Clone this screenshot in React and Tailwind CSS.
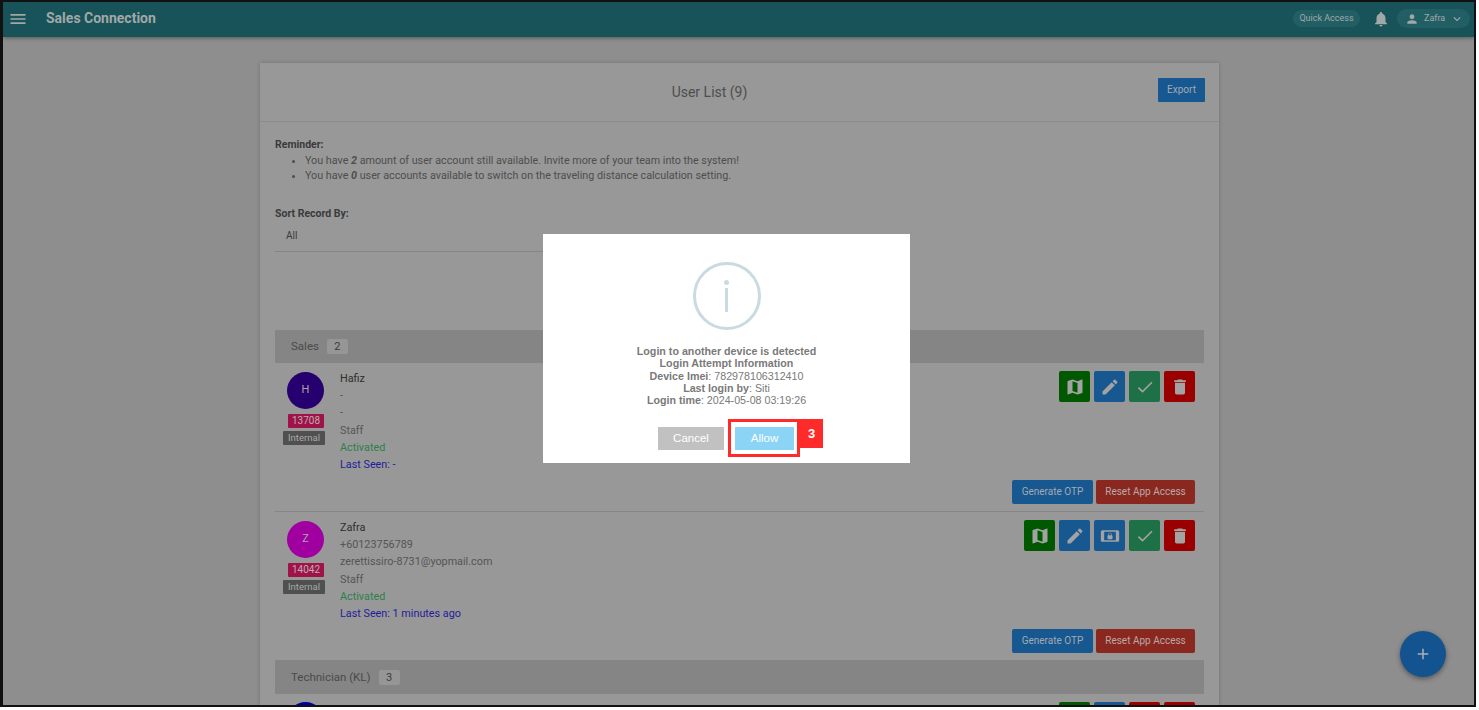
import React from "react";
import { MdMenu, MdNotifications, MdPerson, MdKeyboardArrowDown, MdMap, MdEdit, MdCheck, MdDelete, MdScreenLockLandscape, MdAdd } from "react-icons/md";

function IconBtn({ color, icon: Icon }) {
  return (
    <div className={`w-[31px] h-[31px] rounded-[2px] flex items-center justify-center text-[#a3a3a3] ${color}`}>
      <Icon size={20} />
    </div>
  );
}

function UserRow({ initial, avatar, name, phone, email, code, seen, lock }) {
  return (
    <div className="h-[149px] border-b border-[#868686] flex pl-[8px] pr-[9px] pt-[8px] pb-[8px]">
      <div className="w-[42px] flex flex-col items-end">
        <div className={`w-[37px] h-[37px] mt-[1px] mr-[1px] rounded-full flex items-center justify-center text-[#b0a0b0] text-[11px] ${avatar}`}>{initial}</div>
        <div className="mt-[5px] mr-[1px] w-[36px] h-[14px] rounded-[1px] bg-[#a0134a] text-[#b8b0b0] text-[10px] leading-[14px] text-center">{code}</div>
        <div className="mt-[3px] w-[42px] h-[14px] rounded-[1px] bg-[#505050] text-[#a8a8a8] text-[9.5px] leading-[14px] text-center">Internal</div>
      </div>
      <div className="ml-[15px] flex-1 text-[10.8px] leading-[17.2px] text-[#555555] -mt-[1px]">
        <div className="text-[#2e2e2e]">{name}</div>
        <div>{phone}</div>
        <div>{email}</div>
        <div>Staff</div>
        <div className="text-[#2e7f4f]">Activated</div>
        <div className="text-[#241c9c]">{seen}</div>
      </div>
      <div className="flex flex-col justify-between items-end">
        <div className="flex gap-[4px]">
          <IconBtn color="bg-[#005800]" icon={MdMap} />
          <IconBtn color="bg-[#175890]" icon={MdEdit} />
          {lock && <IconBtn color="bg-[#175890]" icon={MdScreenLockLandscape} />}
          <IconBtn color="bg-[#1e7046]" icon={MdCheck} />
          <IconBtn color="bg-[#9a0000]" icon={MdDelete} />
        </div>
        <div className="flex gap-[3px] -mb-[1px]">
          <div className="w-[81px] h-[24px] rounded-[2px] bg-[#175890] text-[#a3aab0] text-[10px] leading-[24px] text-center">Generate OTP</div>
          <div className="w-[99px] h-[24px] rounded-[2px] bg-[#8a2820] text-[#b8a8a8] text-[10px] leading-[24px] text-center">Reset App Access</div>
        </div>
      </div>
    </div>
  );
}

function GroupHead({ title, count }) {
  return (
    <div className="h-[33px] bg-[#858585] flex items-center pl-[16px] text-[11.5px] text-[#4a4a4a]">
      <span>{title}</span>
      <span className="ml-[8px] w-[21px] h-[15px] rounded-[2px] bg-[#969696] text-[#3a3a3a] text-[11px] leading-[15px] text-center">{count}</span>
    </div>
  );
}

export default function App() {
  return (
    <div className="w-[1479px] h-[710px] bg-white overflow-hidden font-['Roboto',sans-serif]">
      <div className="relative w-[1476px] h-[707px] border-l-[3px] border-r-[2px] border-t-[2px] border-b-[2px] border-[#111111] bg-[#8e8e8e] overflow-hidden">
        <header className="h-[35px] pb-[2px] bg-[#175359] shadow-[0_1px_4px_rgba(0,0,0,0.4)] flex items-center text-[#a0a8a8]">
          <MdMenu size={20} className="ml-[5px]" />
          <span className="ml-[18px] text-[14px] font-bold">Sales Connection</span>
          <div className="ml-auto flex items-center mr-[4px]">
            <div className="w-[67px] h-[17px] rounded-full bg-[#225f65] text-[9px] leading-[17px] text-center">Quick Access</div>
            <MdNotifications size={18} className="ml-[12px]" />
            <div className="ml-[7px] w-[73px] h-[19px] rounded-full bg-[#225f65] flex items-center text-[9px] pl-[8px]">
              <MdPerson size={14} />
              <span className="ml-[5px]">Zafra</span>
              <MdKeyboardArrowDown size={14} className="ml-[5px]" />
            </div>
          </div>
        </header>

        <main className="pt-[26px] pl-[257px]">
          <section className="w-[959px] bg-[#989898] shadow-[0_0_4px_rgba(0,0,0,0.2)]">
            <div className="h-[59px] pr-[60px] border-b border-[#8c8c8c] flex items-center justify-center relative text-[14px] text-[#4e4e4e]">
              User List (9)
              <div className="absolute right-[14px] top-[15px] w-[47px] h-[24px] rounded-[1px] bg-[#175890] text-[#a3aab0] text-[10px] leading-[24px] text-center">Export</div>
            </div>
            <div className="px-[15px] pt-[16px]">
              <div className="text-[10.5px] font-bold text-[#3a3a3a] leading-[14px]">Reminder:</div>
              <ul className="list-disc pl-[30px] text-[10.75px] leading-[15px] text-[#4e4e4e] mt-[1px]">
                <li>You have <b className="italic">2</b> amount of user account still available. Invite more of your team into the system!</li>
                <li>You have <b className="italic">0</b> user accounts available to switch on the traveling distance calculation setting.</li>
              </ul>
              <div className="mt-[24px] text-[10.5px] font-bold text-[#3a3a3a] leading-[14px]">Sort Record By:</div>
              <div className="mt-[6px] w-[460px] h-[25px] border-b border-[#858585] pl-[11px] pt-[2px] text-[10px] leading-[14px] text-[#3a3a3a]">All</div>
              <div className="mt-[78px]">
                <GroupHead title="Sales" count="2" />
                <UserRow initial="H" avatar="bg-[#26006e]" name="Hafiz" phone="-" email="-" code="13708" seen="Last Seen: -" />
                <UserRow initial="Z" avatar="bg-[#a000a0]" name="Zafra" phone="+60123756789" email="zerettissiro-8731@yopmail.com" code="14042" seen="Last Seen: 1 minutes ago" lock />
                <GroupHead title="Technician (KL)" count="3" />
                <div className="h-[12px] overflow-hidden flex justify-between pl-[12px] pr-[9px] pt-[8px]">
                  <div className="w-[37px] h-[37px] rounded-full bg-[#0000a0]" />
                  <div className="flex gap-[4px]">
                    <IconBtn color="bg-[#005800]" icon={MdMap} />
                    <IconBtn color="bg-[#175890]" icon={MdEdit} />
                    <IconBtn color="bg-[#9a0000]" icon={MdCheck} />
                    <IconBtn color="bg-[#9a0000]" icon={MdDelete} />
                  </div>
                </div>
              </div>
            </div>
          </section>
        </main>

        <div className="absolute left-[1397px] top-[629px] w-[46px] h-[46px] rounded-full bg-[#135490] shadow-[0_2px_5px_rgba(0,0,0,0.4)] flex items-center justify-center text-[#a8b0b8]">
          <MdAdd size={18} />
        </div>

        <div className="absolute left-[540px] top-[232px] w-[367px] h-[229px] bg-white flex flex-col items-center font-['Liberation_Sans',sans-serif]">
          <div className="mt-[28px] w-[68px] h-[68px] rounded-full border-[3px] border-[#c9dae1] flex flex-col items-center justify-center">
            <div className="w-[5px] h-[5px] rounded-full bg-[#c9dae1]" />
            <div className="mt-[3px] w-[3px] h-[24px] bg-[#c9dae1]" />
          </div>
          <div className="mt-[15px] text-[10.7px] leading-[12.3px] text-[#797979] text-center">
            <div className="font-bold">Login to another device is detected</div>
            <div className="font-bold">Login Attempt Information</div>
            <div><b>Device Imei</b>: 782978106312410</div>
            <div><b>Last login by</b>: Siti</div>
            <div><b>Login time</b>: 2024-05-08 03:19:26</div>
          </div>
          <div className="mt-[21px] flex items-center pr-[1px] gap-[11px] text-white text-[11.5px]">
            <div className="w-[66px] h-[23px] bg-[#c1c1c1] leading-[23px] text-center">Cancel</div>
            <div className="w-[59px] h-[23px] bg-[#8cd4f5] leading-[23px] text-center">Allow</div>
          </div>
        </div>

        <div className="absolute left-[725px] top-[417px] w-[72px] h-[38px] border-[3px] border-[#ff2a2a]" />
        <div className="absolute left-[797px] top-[417px] w-[23px] h-[29px] bg-[#ff2a2a] text-white text-[13px] font-bold leading-[30px] text-center font-['Liberation_Sans',sans-serif]">3</div>
      </div>
    </div>
  );
}
